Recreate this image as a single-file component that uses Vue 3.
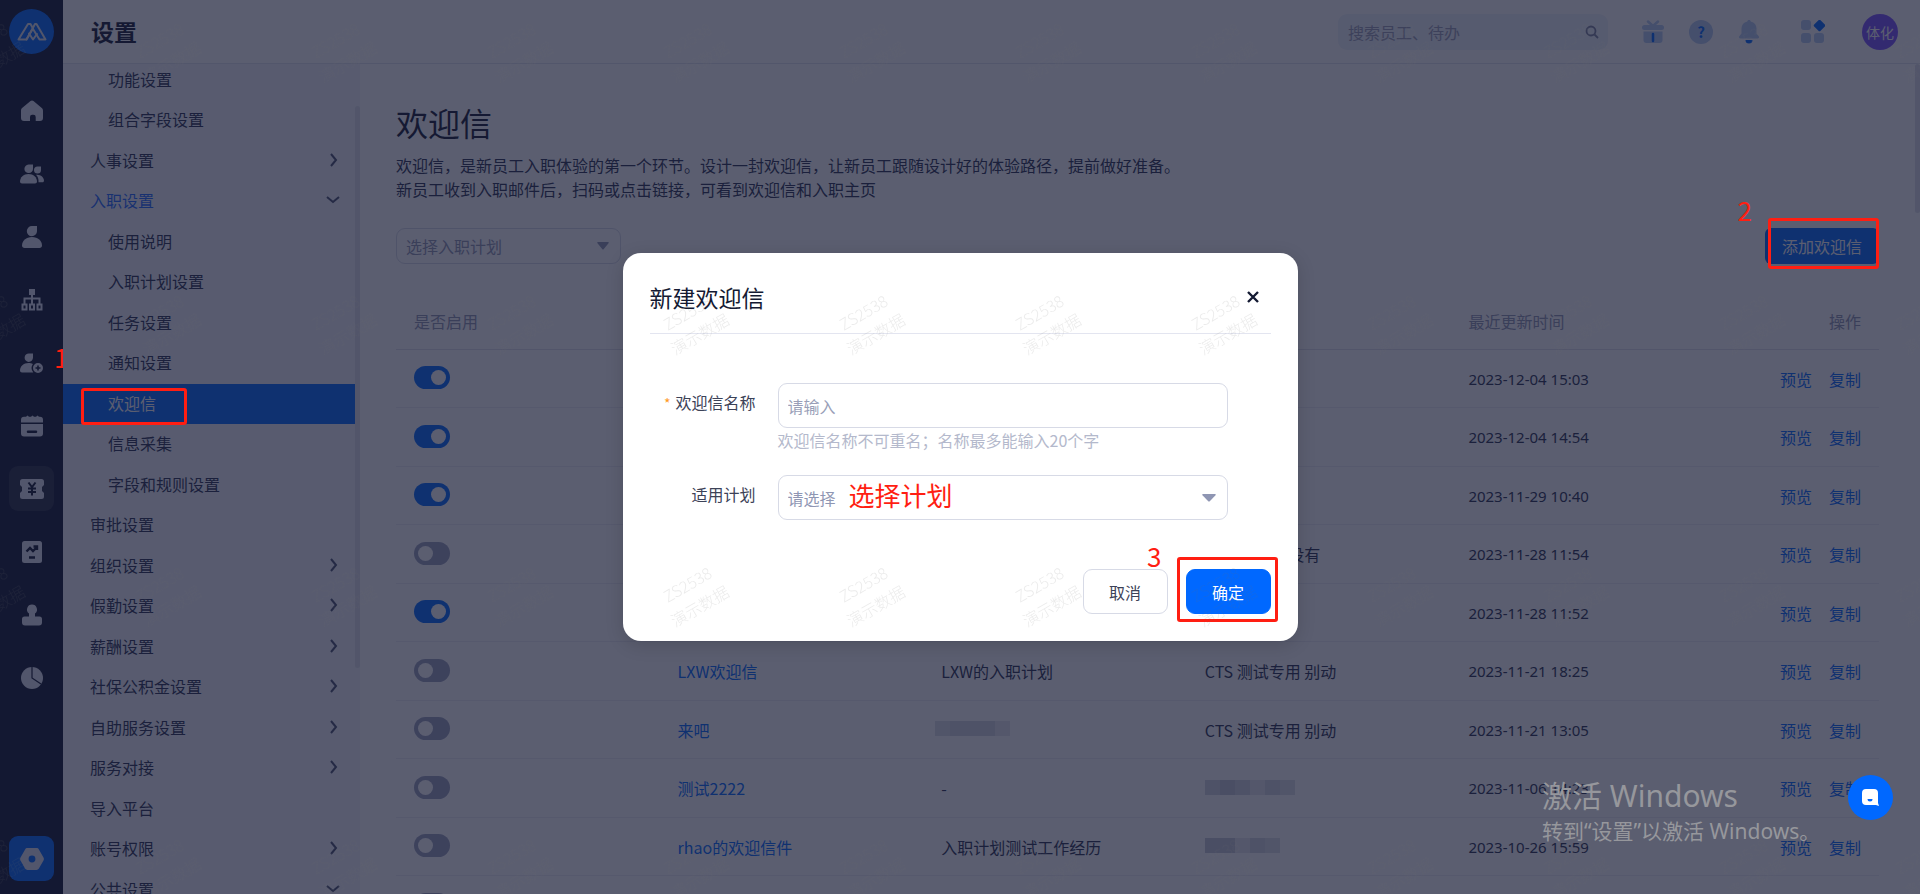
<script setup>
import { ref } from 'vue';

const menu = ref([
  { label: '功能设置', child: true },
  { label: '组合字段设置', child: true },
  { label: '人事设置', arrow: 'right' },
  { label: '入职设置', arrow: 'down', open: true },
  { label: '使用说明', child: true },
  { label: '入职计划设置', child: true },
  { label: '任务设置', child: true },
  { label: '通知设置', child: true },
  { label: '欢迎信', child: true, active: true },
  { label: '信息采集', child: true },
  { label: '字段和规则设置', child: true },
  { label: '审批设置' },
  { label: '组织设置', arrow: 'right' },
  { label: '假勤设置', arrow: 'right' },
  { label: '薪酬设置', arrow: 'right' },
  { label: '社保公积金设置', arrow: 'right' },
  { label: '自助服务设置', arrow: 'right' },
  { label: '服务对接', arrow: 'right' },
  { label: '导入平台' },
  { label: '账号权限', arrow: 'right' },
  { label: '公共设置', arrow: 'down' }
]);

// numbers in planMask / userMask are the shades of the masked blocks
const letters = ref([
  { id: 1, on: true, time: '2023-12-04 15:03' },
  { id: 2, on: true, time: '2023-12-04 14:54' },
  { id: 3, on: true, time: '2023-11-29 10:40' },
  { id: 4, on: false, user: 'CTS 测试用 没有', time: '2023-11-28 11:54' },
  { id: 5, on: true, time: '2023-11-28 11:52' },
  { id: 6, on: false, name: 'LXW欢迎信', plan: 'LXW的入职计划', user: 'CTS 测试专用 别动', time: '2023-11-21 18:25' },
  { id: 7, on: false, name: '来吧', planMask: [2, 3, 3, 3, 1], user: 'CTS 测试专用 别动', time: '2023-11-21 13:05' },
  { id: 8, on: false, name: '测试2222', plan: '-', userMask: [3, 4, 3, 1, 3, 2], time: '2023-11-06 14:23' },
  { id: 9, on: false, name: 'rhao的欢迎信件', plan: '入职计划测试工作经历', userMask: [4, 4, 1, 3, 2], time: '2023-10-26 15:59' },
  { id: 10, on: false, time: '' }
]);

const keyword = ref('');
const planFilter = ref('');
const letterName = ref('');
const letterPlan = ref('');
</script>

<template>
  <div class="page">

    <nav class="rail">
      <a class="logo" href="#" aria-label="首页">
        <svg width="32" height="22" viewBox="0 0 32 22" fill="none" stroke="currentColor" stroke-width="2" stroke-linejoin="round" stroke-linecap="round">
          <path d="M2.500 18.500 L12 3 H14.500 L17 7.500 L10.500 18.500 Z" />
          <path d="M10.500 18.500 L19 3 H20.500 L29.500 18.500 H23.500 L17 8" />
          <path d="M13 12.500 L17 18.500 L21 13" />
        </svg>
      </a>
      <div class="rail-list">
        <a class="rail-item" href="#" aria-label="主页">
          <svg width="24" height="24" viewBox="0 0 24 24" fill="currentColor">
            <path d="M10.500 2.100a2.300 2.300 0 0 1 3 0l8 6.700c.9.7 1.500 1.700 1.500 2.900V19a3 3 0 0 1-3 3h-4.300v-4a2.300 2.300 0 0 0-2.300-2.300h-1A2.300 2.300 0 0 0 10 18v4H4a3 3 0 0 1-3-3v-7.300c0-1.100.5-2.200 1.400-2.900z" />
          </svg>
        </a>
        <a class="rail-item" href="#" aria-label="团队">
          <svg width="24" height="24" viewBox="0 0 24 24" fill="currentColor">
            <path d="M8.500 2.500h4.500v4.200A4.300 4.300 0 1 1 8.500 2.500z" />
            <path d="M8.500 12c5 0 8.500 3.500 8.500 7.500 0 1.200-.8 2-2 2H2c-1.200 0-2-.8-2-2C0 15.500 3.500 12 8.500 12z" />
            <path d="M17.500 4.500H21V8a3.500 3.500 0 1 1-3.500-3.500z" />
            <path d="M16 12.800c4.500-.6 8 2.400 8 6 0 .9-.6 1.500-1.500 1.500h-4c.3-3-.6-5.600-2.500-7.500z" />
          </svg>
        </a>
        <a class="rail-item" href="#" aria-label="员工">
          <svg width="24" height="24" viewBox="0 0 24 24" fill="currentColor">
            <path d="M12 1h5v5.200A5.100 5.100 0 1 1 12 1z" />
            <path d="M12 12c6 0 10 4 10 8.500 0 1.600-1 2.500-2.500 2.500h-15C3 23 2 22.100 2 20.500 2 16 6 12 12 12z" />
          </svg>
        </a>
        <a class="rail-item" href="#" aria-label="组织">
          <svg width="24" height="24" viewBox="0 0 24 24" fill="none" stroke="currentColor" stroke-width="2">
            <rect x="10" y="2" width="4" height="4" fill="currentColor" />
            <path d="M12 6v10M4.500 16v-5.500h15V16" />
            <rect x="2.500" y="16.500" width="4" height="5" />
            <rect x="10" y="16.500" width="4" height="5" />
            <rect x="17.500" y="16.500" width="4" height="5" />
          </svg>
        </a>
        <a class="rail-item" href="#" aria-label="入职">
          <svg width="24" height="24" viewBox="0 0 24 24" fill="currentColor">
            <path d="M9 2.500h4v4.300A4.200 4.200 0 1 1 9 2.500z" />
            <path d="M8.500 12c1.800 0 3 .3 4.400 1a7 7 0 0 0 .4 8.500H2c-1.200 0-2-.8-2-2C0 15.500 3.500 12 8.500 12z" />
            <path fill-rule="evenodd" d="M18 12a5 5 0 1 1 0 10 5 5 0 0 1 0-10zm-.8 2.500v1.700h-1.700v1.600h1.700v1.700h1.600v-1.700h1.700v-1.600h-1.700v-1.700z" />
          </svg>
        </a>
        <a class="rail-item" href="#" aria-label="考勤">
          <svg width="24" height="24" viewBox="0 0 24 24" fill="currentColor">
            <path d="M1 8.500V6c0-2 1-3.200 3-3.200h2L7.500 1.500 9 2.800h2L12.500 1.500l1.500 1.300h2l1.500-1.300L19 2.800h1c2 0 3 1.200 3 3.200v2.500z" />
            <path fill-rule="evenodd" d="M1 10h22v9.500a3 3 0 0 1-3 3H4a3 3 0 0 1-3-3zM8 16.500a1 1 0 0 0 0 2.500h8a1 1 0 0 0 0-2.500z" />
          </svg>
        </a>
        <a class="rail-item current" href="#" aria-label="薪酬">
          <svg width="24" height="24" viewBox="0 0 24 24">
            <path fill="currentColor" d="M2.500 2h19A2.500 2.500 0 0 1 24 4.500V8l-2 2v4l2 2v3.500a2.500 2.500 0 0 1-2.500 2.500h-19A2.500 2.500 0 0 1 0 19.500V16l2-2v-4L0 8V4.500A2.500 2.500 0 0 1 2.500 2z" />
            <path class="cut" fill="none" stroke-width="2" d="M8.500 5.500 12 10l3.500-4.500M12 10v8.500M8 11.500h8M8 15h8" />
          </svg>
        </a>
        <a class="rail-item" href="#" aria-label="绩效">
          <svg width="24" height="24" viewBox="0 0 24 24">
            <rect x="2" y="1" width="20" height="22" rx="2.500" fill="currentColor" />
            <path class="cut" fill="none" stroke-width="2.400" d="M6.500 11.500 10 8l3 3 4-4M13.500 6.500H17V10M9 17.500h6" />
          </svg>
        </a>
        <a class="rail-item" href="#" aria-label="审批">
          <svg width="24" height="24" viewBox="0 0 24 24" fill="currentColor">
            <path d="M12 1.500a5 5 0 0 1 3 9v3h4.500a2.500 2.500 0 0 1 2.500 2.500v3.500a3 3 0 0 1-3 3H5a3 3 0 0 1-3-3V16a2.500 2.500 0 0 1 2.500-2.500H9v-3a5 5 0 0 1 3-9z" />
          </svg>
        </a>
        <a class="rail-item" href="#" aria-label="报表">
          <svg width="24" height="24" viewBox="0 0 24 24">
            <circle cx="12" cy="12" r="11" fill="currentColor" />
            <path class="cut" fill="none" stroke-width="1.200" d="M12 1v11l9 6" />
          </svg>
        </a>
      </div>
      <a class="rail-item setting" href="#" aria-label="设置">
        <svg width="24" height="24" viewBox="0 0 24 24">
          <path fill="currentColor" fill-rule="evenodd" d="M7.500 1h9c1 0 1.900.5 2.400 1.400l4.600 8.200c.5.900.5 1.900 0 2.800l-4.600 8.200c-.5.900-1.400 1.400-2.400 1.400h-9c-1 0-1.900-.5-2.400-1.400L.5 13.400a2.800 2.800 0 0 1 0-2.800l4.600-8.200C5.600 1.500 6.500 1 7.500 1zM12 8.600a3.400 3.400 0 1 0 0 6.800 3.400 3.400 0 0 0 0-6.800z" />
        </svg>
      </a>
    </nav>

    <div class="workspace">
      <header class="topbar">
        <h1 class="app-title">设置</h1>
        <label class="search">
          <input v-model="keyword" type="text" placeholder="搜索员工、待办" aria-label="搜索" />
          <svg width="14" height="14" viewBox="0 0 14 14" fill="none" stroke="currentColor" stroke-width="1.800">
            <circle cx="6" cy="6" r="4.500" />
            <path d="M9.500 9.500 13 13" />
          </svg>
        </label>
        <div class="tools">
          <button class="tool" aria-label="礼物">
            <svg width="24" height="24" viewBox="0 0 24 24">
              <path d="M7 1.500 12 6l5-4.500" fill="none" stroke="#b4cbf2" stroke-width="2.500" stroke-linecap="round" />
              <rect x="1" y="5" width="22" height="5" rx="2.500" fill="#b4cbf2" />
              <path d="M2.500 11.500h19V20a3 3 0 0 1-3 3h-13a3 3 0 0 1-3-3z" fill="#b4cbf2" />
              <path d="M12 14v7" stroke="#0068ff" stroke-width="2.500" stroke-linecap="round" />
            </svg>
          </button>
          <button class="tool" aria-label="帮助"><span class="help">?</span></button>
          <button class="tool" aria-label="通知">
            <svg width="24" height="24" viewBox="0 0 24 24">
              <path d="M12 0c1 0 1.500.6 1.700 1.400C17.500 2.400 19.500 5 19.500 8.500v5l2.200 2.800c.9 1.200.3 2.200-1 2.200H3.300c-1.300 0-1.900-1-1-2.200l2.200-2.800v-5c0-3.500 2-6.100 5.800-7.100C10.500.6 11 0 12 0z" fill="#b4cbf2" />
              <path d="M8.500 20h7a3.500 3.500 0 0 1-7 0z" fill="#0068ff" />
            </svg>
          </button>
          <button class="tool apps" aria-label="应用">
            <svg width="24" height="24" viewBox="0 0 24 24">
              <rect x="0" y="0" width="10" height="10" rx="3" fill="#b4cbf2" />
              <rect x="0" y="13" width="10" height="10" rx="3" fill="#b4cbf2" />
              <rect x="13" y="13" width="10" height="10" rx="3" fill="#b4cbf2" />
              <rect x="14" y="1" width="9" height="9" rx="1.500" fill="#0068ff" transform="rotate(45 18.500 5.500)" />
            </svg>
          </button>
          <button class="avatar">体化</button>
        </div>
      </header>

      <div class="body">
        <aside class="sidebar">
          <ul class="menu">
            <li v-for="item in menu" :key="item.label">
              <a href="#" class="menu-item" :class="{ child: item.child, active: item.active, open: item.open }">
                {{ item.label }}
                <svg v-if="item.arrow === 'right'" class="arrow" width="14" height="14" viewBox="0 0 14 14" fill="none" stroke="currentColor" stroke-width="2">
                  <path d="M5 1l5 6-5 6" />
                </svg>
                <svg v-if="item.arrow === 'down'" class="arrow" width="14" height="14" viewBox="0 0 14 14" fill="none" stroke="currentColor" stroke-width="2">
                  <path d="M1 4l6 5 6-5" />
                </svg>
              </a>
            </li>
          </ul>
          <div class="side-thumb"></div>
        </aside>

        <main class="content">
          <h2 class="page-title">欢迎信</h2>
          <p class="page-desc">
            欢迎信，是新员工入职体验的第一个环节。设计一封欢迎信，让新员工跟随设计好的体验路径，提前做好准备。<br />
            新员工收到入职邮件后，扫码或点击链接，可看到欢迎信和入职主页
          </p>

          <div class="filter-row">
            <div class="select-box small">
              <select v-model="planFilter" aria-label="选择入职计划">
                <option value="">选择入职计划</option>
              </select>
              <svg width="12" height="8" viewBox="0 0 12 8" fill="currentColor"><path d="M1 0h10q1.500 0 .5 1.200L6.800 7q-.8 1-1.600 0L.5 1.200Q-.5 0 1 0z" /></svg>
            </div>
            <button class="add-btn">添加欢迎信</button>
          </div>

          <table class="letters">
            <colgroup>
              <col /><col /><col /><col /><col /><col class="col-ops" />
            </colgroup>
            <thead>
              <tr>
                <th>是否启用</th>
                <th>欢迎信名称</th>
                <th>适用计划</th>
                <th>更新人</th>
                <th>最近更新时间</th>
                <th class="ops">操作</th>
              </tr>
            </thead>
            <tbody>
              <tr v-for="row in letters" :key="row.id">
                <td><input v-model="row.on" type="checkbox" class="switch" aria-label="是否启用" /></td>
                <td><a href="#">{{ row.name }}</a></td>
                <td>
                  <span v-if="row.planMask" class="mosaic shifted">
                    <i v-for="(s, i) in row.planMask" :key="i" :class="'shade-' + s"></i>
                  </span>
                  <template v-else>{{ row.plan }}</template>
                </td>
                <td>
                  <span v-if="row.userMask" class="mosaic">
                    <i v-for="(s, i) in row.userMask" :key="i" :class="'shade-' + s"></i>
                  </span>
                  <template v-else>{{ row.user }}</template>
                </td>
                <td class="time">{{ row.time }}</td>
                <td class="ops"><a href="#">预览</a><a href="#">复制</a></td>
              </tr>
            </tbody>
          </table>
          <div class="main-thumb"></div>
        </main>
      </div>
    </div>

    <div class="mask">
      <section class="dialog" role="dialog" aria-labelledby="dialog-title">
        <div class="dialog-head">
          <h3 id="dialog-title">新建欢迎信</h3>
          <button class="close" aria-label="关闭">
            <svg width="12" height="12" viewBox="0 0 12 12" fill="none" stroke="currentColor" stroke-width="2.400">
              <path d="M1 1l10 10M11 1 1 11" />
            </svg>
          </button>
        </div>
        <div class="field">
          <label for="letter-name"><span class="star">*</span>欢迎信名称</label>
          <div class="control">
            <input id="letter-name" v-model="letterName" class="text-input" type="text" placeholder="请输入" maxlength="20" />
            <p class="hint">欢迎信名称不可重名；名称最多能输入20个字</p>
          </div>
        </div>
        <div class="field">
          <label for="letter-plan">适用计划</label>
          <div class="control select-box">
            <select id="letter-plan" v-model="letterPlan">
              <option value="">请选择</option>
            </select>
            <svg width="14" height="8" viewBox="0 0 14 8" fill="currentColor"><path d="M1 0h12q1.500 0 .5 1.200L8 7q-1 1-2 0L.5 1.200Q-.5 0 1 0z" /></svg>
            <span class="note note-plan">选择计划</span>
          </div>
        </div>
        <div class="dialog-foot">
          <button class="btn">取消</button>
          <button class="btn primary">确定</button>
          <span class="note note-three">3</span>
          <span class="frame frame-three"></span>
        </div>
      </section>
    </div>

    <button class="chat" aria-label="客服">
      <svg width="17" height="17" viewBox="0 0 17 17">
        <path d="M4 0h8a4 4 0 0 1 4 4v10l1 3-3-1H4a4 4 0 0 1-4-4V4a4 4 0 0 1 4-4z" fill="#fff" />
        <path d="M5.500 10h5a2.500 2.500 0 0 1-5 0z" fill="#0068ff" />
      </svg>
    </button>

    <div class="activate">
      <p class="activate-title">激活 Windows</p>
      <p class="activate-text">转到“设置”以激活 Windows。</p>
    </div>

    <span class="note note-one">1</span>
    <span class="frame frame-one"></span>
    <span class="note note-two">2</span>
    <span class="frame frame-two"></span>

    <svg class="watermark" width="100%" height="100%" aria-hidden="true">
      <defs>
        <pattern id="wm" x="-98" y="-84" width="176" height="272" patternUnits="userSpaceOnUse">
          <g transform="rotate(-30 88 136)" text-anchor="middle">
            <text x="88" y="129">ZS2538</text>
            <text x="88" y="154">演示数据</text>
          </g>
        </pattern>
      </defs>
      <rect width="100%" height="100%" fill="url(#wm)" />
    </svg>
  </div>
</template>

<style>
body {
  margin: 0;
  overflow: hidden;
}
</style>

<style scoped>
.page {
  position: relative;
  display: flex;
  height: 100vh;
  overflow: hidden;
  font-family: "Noto Sans CJK SC", sans-serif;
  font-size: 16px;
  line-height: 24px;
  color: #2b3150;
  background: #fff;
}

a {
  color: #0068ff;
  text-decoration: none;
}

button, input, select {
  font: inherit;
  color: inherit;
  border: none;
  background: none;
  padding: 0;
  margin: 0;
  outline: none;
  box-sizing: border-box;
}

h1, h2, h3, p, ul {
  margin: 0;
  padding: 0;
}

/* left icon rail */
.rail {
  width: 63px;
  flex-shrink: 0;
  box-sizing: border-box;
  padding: 9px 9px 13px;
  display: flex;
  flex-direction: column;
  background: #0e142f;
}

.logo {
  width: 45px;
  height: 45px;
  flex-shrink: 0;
  border-radius: 50%;
  display: flex;
  align-items: center;
  justify-content: center;
  background: #0068ff;
  color: #dfe3ee;
}

.rail-list {
  display: flex;
  flex-direction: column;
  gap: 18px;
  margin-top: 34px;
}

.rail-item {
  width: 45px;
  height: 45px;
  border-radius: 9px;
  display: flex;
  align-items: center;
  justify-content: center;
  color: #e0e3f0;
}

.rail-item .cut {
  stroke: #0e142f;
}

.rail-item.current {
  background: #262c42;
}

.rail-item.setting {
  margin-top: auto;
  background: #0068ff;
}

.workspace {
  flex: 1;
  min-width: 0;
  display: flex;
  flex-direction: column;
}

/* top bar */
.topbar {
  height: 64px;
  flex-shrink: 0;
  box-sizing: border-box;
  border-bottom: 1px solid #e1e4ee;
  padding: 0 22px 0 28px;
  display: flex;
  align-items: center;
}

.app-title {
  font-size: 23px;
  font-weight: 700;
  padding-bottom: 2px;
  color: #141a33;
}

.search {
  width: 270px;
  height: 36px;
  box-sizing: border-box;
  margin-left: auto;
  padding: 0 9px 0 10px;
  border-radius: 9px;
  background: #eff3fa;
  display: flex;
  align-items: center;
  color: #7d84a0;
}

.search input {
  flex: 1;
  min-width: 0;
}

.search input::placeholder,
.text-input::placeholder {
  color: #9a9fb8;
  opacity: 1;
}

.tools {
  display: flex;
  align-items: center;
  gap: 24px;
  margin-left: 33px;
}

.tool {
  width: 24px;
  height: 24px;
  display: flex;
}

.help {
  width: 24px;
  height: 24px;
  border-radius: 50%;
  background: #b4cbf2;
  color: #0068ff;
  font-size: 15px;
  font-weight: 700;
}

.apps {
  margin-left: 16px;
}

.avatar {
  width: 36px;
  height: 36px;
  margin-left: 13px;
  border-radius: 50%;
  background: #7b50ff;
  color: #fff;
  font-size: 14px;
}

.body {
  flex: 1;
  min-height: 0;
  display: flex;
}

/* settings menu */
.sidebar {
  width: 297px;
  flex-shrink: 0;
  overflow: hidden;
  display: flex;
  background: #f3f6fb;
}

.menu {
  flex: 1;
  list-style: none;
  margin-top: -4px;
}

.menu li:nth-child(even) {
  padding-bottom: 1px;
}

.menu-item {
  height: 40px;
  box-sizing: border-box;
  padding: 0 15px 2px 27px;
  display: flex;
  align-items: center;
  justify-content: space-between;
  color: #2b3150;
}

.menu-item.child {
  padding-left: 45px;
}

.menu-item.open {
  color: #1f6aff;
}

.menu-item.active {
  background: #0068ff;
  color: #fff;
}

.arrow {
  color: #4a5070;
}

.side-thumb {
  width: 5px;
  height: 562px;
  margin-top: 42px;
  border-radius: 3px;
  background: #dfe2ea;
}

/* page content */
.content {
  position: relative;
  flex: 1;
  min-width: 0;
  overflow: hidden;
  padding: 34px 41px 0 36px;
}

.page-title {
  font-size: 32px;
  line-height: 48px;
  font-weight: 400;
  color: #141a33;
}

.page-desc {
  margin-top: 7px;
  white-space: nowrap;
}

.filter-row {
  display: flex;
  justify-content: space-between;
  margin: 27px 0 29px;
}

.select-box {
  position: relative;
  display: flex;
  align-items: center;
  color: #8f96b3;
}

.select-box select {
  width: 100%;
  height: 45px;
  padding: 0 40px 0 9px;
  border: 1px solid #d7dae6;
  border-radius: 9px;
  appearance: none;
}

.select-box svg {
  position: absolute;
  right: 12px;
}

.select-box.small {
  width: 225px;
}

.select-box.small select {
  height: 36px;
}

.add-btn {
  width: 114px;
  height: 36px;
  border-radius: 6px;
  background: #0068ff;
  color: #fff;
}

.letters {
  width: 100%;
  table-layout: fixed;
  border-collapse: separate;
  border-spacing: 0;
}

.col-ops {
  width: 165px;
}

.letters th,
.letters td {
  padding: 0 18px;
  text-align: left;
  font-weight: inherit;
  white-space: nowrap;
  box-sizing: border-box;
  height: 58px;
  border-bottom: 1px solid #edeff5;
}

.letters tr:nth-child(even) td {
  height: 59px;
}

.letters th {
  height: 57px;
  color: #8f96b3;
  border-color: #dfe2ec;
}

.letters .time {
  font-family: "Noto Sans", sans-serif;
  font-size: 15px;
}

.letters .ops {
  text-align: right;
}

.ops a + a {
  margin-left: 17px;
}

.switch {
  appearance: none;
  display: block;
  width: 36px;
  height: 23px;
  margin-bottom: 2px;
  border-radius: 12px;
  background: #9aa0bc;
  padding: 4px;
}

.switch::before {
  content: "";
  display: block;
  width: 15px;
  height: 15px;
  border-radius: 50%;
  background: #fff;
}

.switch:checked {
  background: #0068ff;
}

.switch:checked::before {
  margin-left: auto;
}

.mosaic {
  display: flex;
  margin-bottom: 2px;
}

.mosaic.shifted {
  margin-left: -6px;
}

.mosaic i {
  width: 15px;
  height: 15px;
}

.shade-1 { background: #e6e8ee; }
.shade-2 { background: #dcdfe8; }
.shade-3 { background: #d2d5df; }
.shade-4 { background: #c6cad6; }

.main-thumb {
  position: absolute;
  top: 0;
  right: 0;
  width: 5px;
  height: 149px;
  border-radius: 3px;
  background: #dfe2ea;
}

/* dialog */
.mask {
  position: absolute;
  inset: 0;
  display: flex;
  align-items: center;
  justify-content: center;
  background: rgba(21, 26, 51, 0.7);
}

.dialog {
  width: 675px;
  box-sizing: border-box;
  padding: 8px 27px 27px;
  border-radius: 18px;
  background: #fff;
  box-shadow: 0 4px 18px rgba(0, 0, 0, 0.15);
}

.dialog-head {
  height: 72px;
  padding-right: 12px;
  display: flex;
  align-items: center;
  justify-content: space-between;
  border-bottom: 1px solid #e3e5f0;
  margin-bottom: 49px;
}

.dialog-head h3 {
  font-size: 23px;
  font-weight: 400;
  color: #141a33;
}

.close {
  display: flex;
  color: #141a33;
}

.field {
  display: flex;
  height: 92px;
}

.field label {
  width: 106px;
  margin-right: 22px;
  line-height: 38px;
  text-align: right;
  color: #3c4257;
}

.star {
  color: #ff9a1f;
  font-size: 14px;
  margin-right: 5px;
}

.control {
  width: 450px;
}

.control.select-box {
  height: 45px;
}

.text-input {
  display: block;
  width: 100%;
  height: 45px;
  padding: 0 9px;
  border: 1px solid #d7dae6;
  border-radius: 9px;
}

.hint {
  color: #b4b9cc;
}

.dialog-foot {
  position: relative;
  display: flex;
  justify-content: flex-end;
  gap: 18px;
  margin-top: 2px;
}

.btn {
  width: 85px;
  height: 45px;
  border: 1px solid #d7dae6;
  border-radius: 9px;
  color: #3c4257;
}

.btn.primary {
  border-color: #0068ff;
  background: #0068ff;
  color: #fff;
}

.chat {
  position: absolute;
  right: 27px;
  bottom: 74px;
  width: 45px;
  height: 45px;
  border-radius: 50%;
  background: #0068ff;
  display: flex;
  align-items: center;
  justify-content: center;
}

.activate {
  position: absolute;
  right: 93px;
  bottom: 48px;
  width: 285px;
  white-space: nowrap;
  font-family: "Noto Sans", "Noto Sans CJK SC", sans-serif;
  color: #96979c;
}

.activate-title {
  font-size: 30px;
  line-height: 40px;
}

.activate-text {
  font-size: 21px;
  line-height: 30px;
}

/* step marks */
.note {
  position: absolute;
  font-size: 26px;
  line-height: 30px;
  color: #ff1e12;
  white-space: nowrap;
}

.frame {
  position: absolute;
  box-sizing: border-box;
  border: 3px solid #ff1e12;
  border-radius: 3px;
}

.note-one {
  left: 54px;
  top: 342px;
  width: 9px;
  overflow: hidden;
}

.frame-one {
  left: 81px;
  top: 388px;
  width: 106px;
  height: 37px;
}

.note-two {
  right: 168px;
  top: 195px;
}

.frame-two {
  right: 41px;
  top: 218px;
  width: 111px;
  height: 51px;
}

.note-plan {
  left: 71px;
  top: 5px;
}

.note-three {
  right: 109px;
  top: -28px;
}

.frame-three {
  right: -7px;
  top: -12px;
  width: 101px;
  height: 65px;
}

.watermark {
  position: absolute;
  inset: 0;
  pointer-events: none;
  font-size: 16px;
  font-weight: 300;
  fill: rgba(100, 100, 100, 0.13);
}
</style>
